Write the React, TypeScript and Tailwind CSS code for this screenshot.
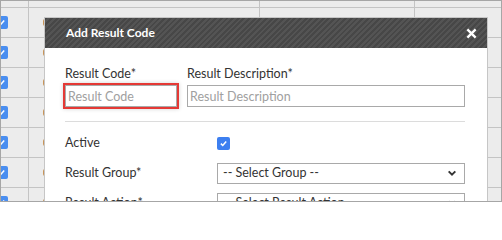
import React from "react";

const rows = [0, 1, 2, 3, 4, 5, 6];

function TableCheck() {
  return (
    <span className="-ml-[6px] flex h-[13px] w-[13px] items-center justify-center rounded-[2px] bg-[#4a8ef0]">
      <svg viewBox="0 0 12 12" className="h-[9px] w-[9px]">
        <path d="M2.5 6.2 L5 8.6 L9.6 3.4" fill="none" stroke="#fff" strokeWidth="2" />
      </svg>
    </span>
  );
}

function Chevron() {
  return (
    <svg viewBox="0 0 10 8" className="h-[7px] w-[10px]">
      <path d="M1.2 1.6 L5 5.4 L8.8 1.6" fill="none" stroke="#333" strokeWidth="2.2" />
    </svg>
  );
}

function SelectBox({ text }: { text: string }) {
  return (
    <div className="flex h-[21px] w-[248px] items-center justify-between border border-[#a9a9a9] bg-white pl-[5px] pr-[7px] text-[#333]">
      <span>{text}</span>
      <Chevron />
    </div>
  );
}

export default function App() {
  return (
    <div className="relative h-[202px] w-[502px] overflow-hidden border border-[#a6a6a6] bg-[#ececec] font-['Lato',sans-serif] text-[12.5px]">
      {/* background grid */}
      <div className="flex h-[7px] border-b border-[#c4c4c4]">
        <div className="w-[28px] border-r border-[#c4c4c4]" />
        <div className="w-[231px] border-r border-[#c4c4c4]" />
        <div className="w-[155px] border-r border-[#c4c4c4]" />
        <div className="flex-1" />
      </div>
      {rows.map((r) => (
        <div key={r} className="flex h-[30px] shrink-0 border-b border-[#c4c4c4]">
          <div className="flex w-[28px] items-center border-r border-[#c4c4c4]">
            <TableCheck />
          </div>
          <div className="flex w-[231px] items-center border-r border-[#c4c4c4] pl-[14px]">
            <span className="h-[7px] w-[3px] rounded-l-[2px] border-l-2 border-[#c8955a]" />
          </div>
          <div className="w-[155px] border-r border-[#c4c4c4]" />
          <div className="flex-1" />
        </div>
      ))}

      {/* modal */}
      <div className="absolute left-[43px] top-[16px] w-[444px] border border-[#c6c6c6] bg-white">
        <div className="flex h-[30px] items-center justify-between bg-[repeating-linear-gradient(135deg,#474747_0px,#474747_2px,#545454_2px,#545454_4px)] pl-[21px] pr-[10px]">
          <span className="text-[12px] font-bold text-white">Add Result Code</span>
          <svg viewBox="0 0 12 12" className="h-[11px] w-[11px]">
            <path d="M1.5 1.5 L10.5 10.5 M10.5 1.5 L1.5 10.5" stroke="#fff" strokeWidth="2.6" />
          </svg>
        </div>
        <div className="pl-[20px] pr-[21px] pt-[18px] text-[#333]">
          <div className="flex gap-[10px]">
            <div className="flex w-[112px] flex-col">
              <label className="h-[16px] leading-[16px]">Result Code*</label>
              <input
                placeholder="Result Code"
                className="mt-[3px] h-[22px] w-[112px] border border-[#a9a9a9] px-[2px] text-[#333] outline-2 outline-[#e53935] shadow-[0_0_4px_2px_rgba(0,0,0,0.18)] placeholder:text-[#a0a0a0]"
              />
            </div>
            <div className="flex w-[278px] flex-col">
              <label className="h-[16px] leading-[16px]">Result Description*</label>
              <input
                placeholder="Result Description"
                className="mt-[3px] h-[22px] w-[278px] border border-[#a9a9a9] px-[2px] text-[#333] outline-none placeholder:text-[#a0a0a0]"
              />
            </div>
          </div>
          <div className="mt-[14px] h-px w-[400px] bg-[#dcdcdc]" />
          <div className="mt-[6px] flex h-[30px] items-center">
            <span className="w-[152px]">Active</span>
            <span className="flex h-[13px] w-[13px] items-center justify-center rounded-[2px] bg-[#3d7ff0]">
              <svg viewBox="0 0 12 12" className="h-[9px] w-[9px]">
                <path d="M2.5 6.2 L5 8.6 L9.6 3.4" fill="none" stroke="#fff" strokeWidth="2" />
              </svg>
            </span>
          </div>
          <div className="flex h-[30px] items-center">
            <span className="w-[152px]">Result Group*</span>
            <SelectBox text="-- Select Group --" />
          </div>
          <div className="flex h-[30px] items-center">
            <span className="w-[152px]">Result Action*</span>
            <SelectBox text="-- Select Result Action --" />
          </div>
        </div>
      </div>
    </div>
  );
}
